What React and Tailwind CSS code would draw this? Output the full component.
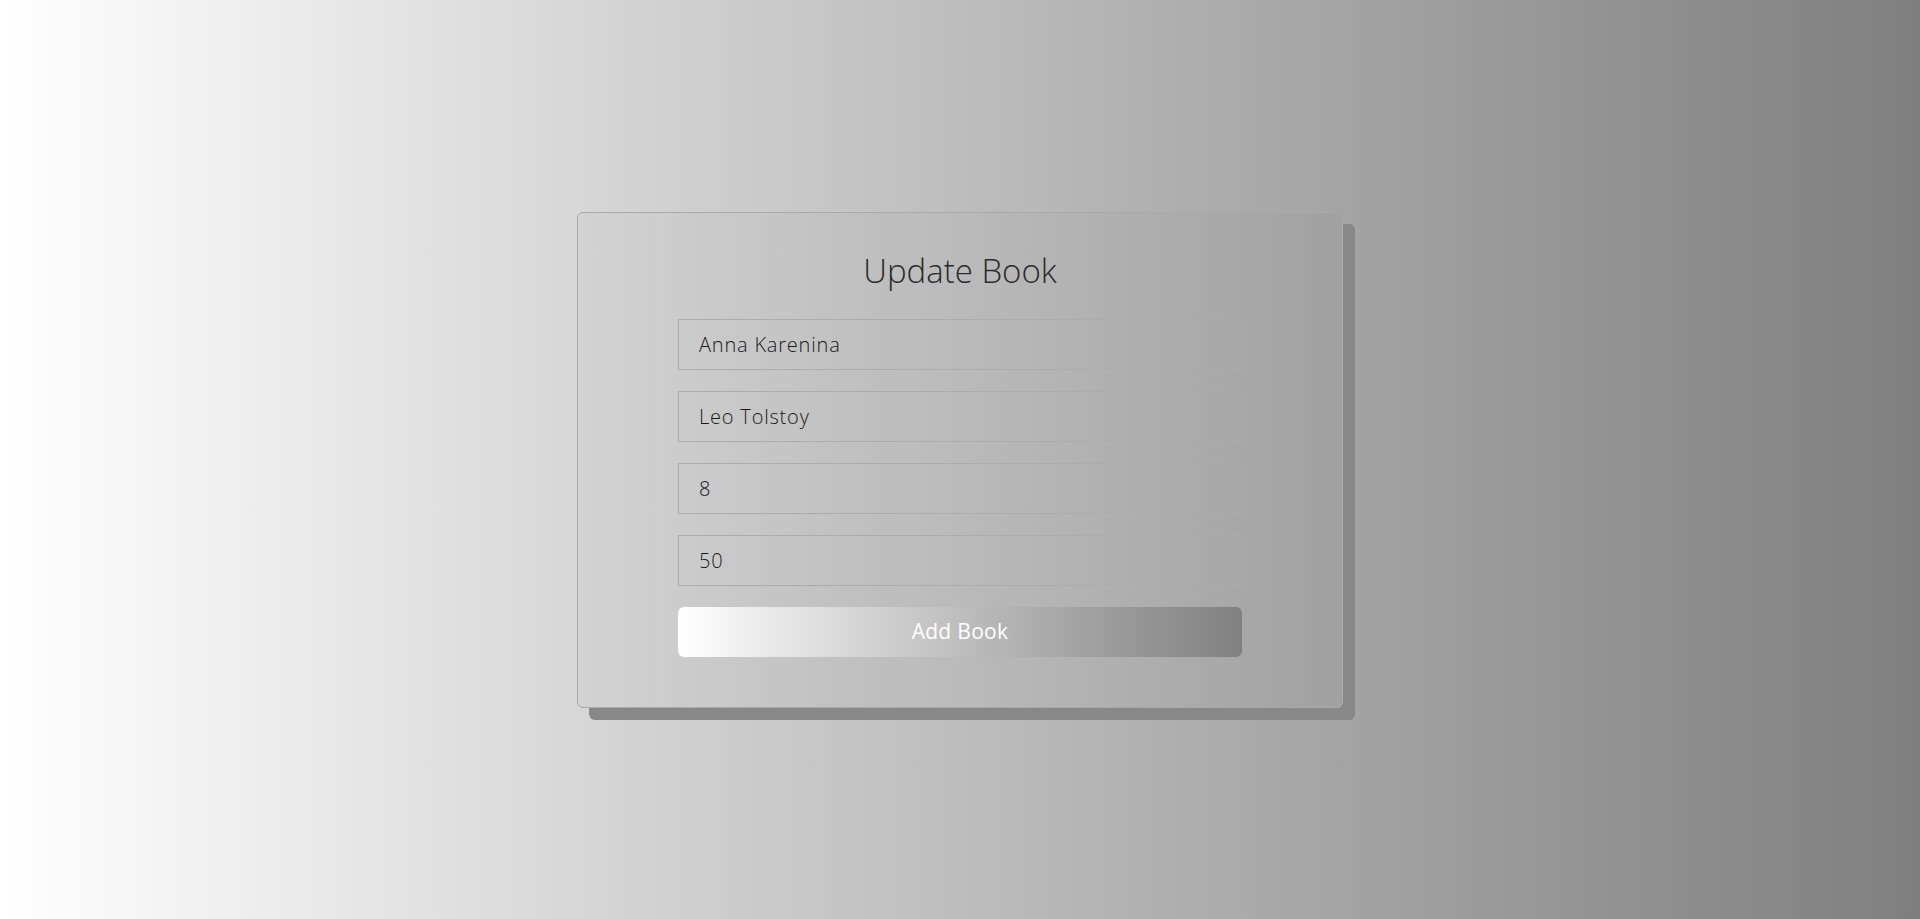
import React, { useState } from "react";

const fields = [
  { name: "title", value: "Anna Karenina" },
  { name: "author", value: "Leo Tolstoy" },
  { name: "rating", value: "8" },
  { name: "price", value: "50" },
];

const UpdateBook = () => {
  const [form, setForm] = useState(
    Object.fromEntries(fields.map((f) => [f.name, f.value]))
  );

  const handleChange = (e) => {
    setForm((prev) => ({ ...prev, [e.target.name]: e.target.value }));
  };

  return (
    <div
      className="min-h-screen w-full flex items-start justify-center bg-gradient-to-r from-white to-[#7f7f7f]"
      style={{ fontFamily: '"Open Sans", "Liberation Sans", sans-serif' }}
    >
      <div className="mt-[212px] w-[766px] h-[496px] rounded-[6px] border border-[#a9a9a9] bg-black/[0.015] shadow-[12px_12px_0_#888888]">
        <h1 className="pt-[36px] text-center text-[33px] leading-[44px] font-light text-[#2b2b2b]">
          Update Book
        </h1>

        {/* Form */}
        <form
          className="mt-[26px] px-[100px] flex flex-col gap-[21px]"
          onSubmit={(e) => e.preventDefault()}
        >
          {fields.map((f) => (
            <input
              key={f.name}
              name={f.name}
              value={form[f.name]}
              onChange={handleChange}
              className="h-[51px] w-full border border-[#b0aaaa] bg-transparent pl-[20px] text-[20px] tracking-[0.8px] font-light text-[#1a1a1a] outline-none"
            />
          ))}
          <button
            type="submit"
            className="h-[50px] w-full rounded-[6px] bg-gradient-to-r from-white to-[#808080] text-[21px] tracking-[0.3px] font-medium text-white"
          >
            Add Book
          </button>
        </form>
      </div>
    </div>
  );
};

export default function App() {
  return <UpdateBook />;
}
